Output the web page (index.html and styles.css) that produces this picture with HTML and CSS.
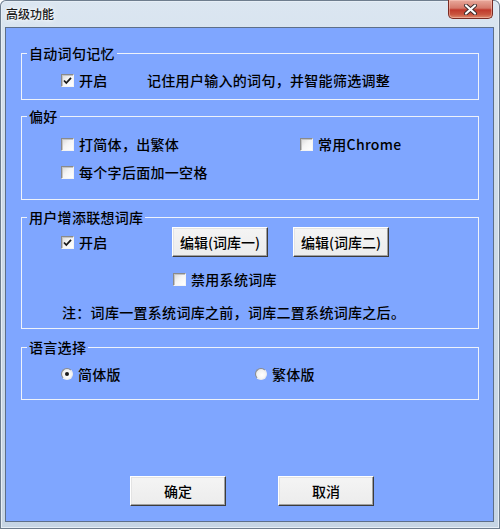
FILE: index.html
```html
<!DOCTYPE html>
<html lang="zh-CN">
<head>
<meta charset="utf-8">
<title>高级功能</title>
<link rel="stylesheet" href="styles.css">
</head>
<body>
<div class="window">
  <div class="titlebar">
    <span class="title">高级功能</span>
    <span class="close">
      <svg width="17" height="11" viewBox="0 0 17 11">
        <path d="M4 1.5 L13 9.5 M13 1.5 L4 9.5" stroke="#3a2a2a" stroke-width="4" stroke-linecap="round"/>
        <path d="M4 1.5 L13 9.5 M13 1.5 L4 9.5" stroke="#ffffff" stroke-width="2.2" stroke-linecap="round"/>
      </svg>
    </span>
  </div>
  <div class="client">
    <fieldset class="group g1">
      <legend>自动词句记忆</legend>
      <div class="body">
        <div class="row">
          <label class="item w86"><span class="cb on"><svg width="11" height="11" viewBox="0 0 11 11"><path d="M2 5.5 L4.3 8 L9 2.8" fill="none" stroke="#1a1a1a" stroke-width="1.8"/></svg></span>开启</label>
          <span class="text">记住用户输入的词句，并智能筛选调整</span>
        </div>
      </div>
    </fieldset>

    <fieldset class="group g2">
      <legend>偏好</legend>
      <div class="body">
        <div class="row">
          <label class="item w239"><span class="cb"></span>打简体，出繁体</label>
          <label class="item"><span class="cb"></span>常用Chrome</label>
        </div>
        <div class="row">
          <label class="item"><span class="cb"></span>每个字后面加一空格</label>
        </div>
      </div>
    </fieldset>

    <fieldset class="group g3">
      <legend>用户增添联想词库</legend>
      <div class="body">
        <div class="row tall">
          <label class="item w111"><span class="cb on"><svg width="11" height="11" viewBox="0 0 11 11"><path d="M2 5.5 L4.3 8 L9 2.8" fill="none" stroke="#1a1a1a" stroke-width="1.8"/></svg></span>开启</label>
          <button class="btn">编辑(词库一)</button>
          <button class="btn">编辑(词库二)</button>
        </div>
        <div class="row r2">
          <label class="item indent"><span class="cb"></span>禁用系统词库</label>
        </div>
        <div class="row r3">
          <span class="text note">注：词库一置系统词库之前，词库二置系统词库之后。</span>
        </div>
      </div>
    </fieldset>

    <fieldset class="group g4">
      <legend>语言选择</legend>
      <div class="body">
        <div class="row">
          <label class="item w194"><span class="rb on"></span>简体版</label>
          <label class="item"><span class="rb"></span>繁体版</label>
        </div>
      </div>
    </fieldset>

    <div class="actions">
      <button class="btn">确定</button>
      <button class="btn">取消</button>
    </div>
  </div>
</div>
</body>
</html>
```

FILE: styles.css
```css
html, body {
  margin: 0;
  padding: 0;
}

body {
  width: 500px;
  height: 529px;
  overflow: hidden;
  font-family: "Noto Sans CJK SC", "Noto Sans", sans-serif;
  background: #ffffff;
}

.window {
  width: 500px;
  height: 529px;
  box-sizing: border-box;
  padding: 0 7px 8px 6px;
  display: flex;
  flex-direction: column;
  background: linear-gradient(180deg, #dbe6f1 0%, #cfdce9 30%, #c6d5e4 100%);
  border-radius: 6px 6px 0 0;
  box-shadow: inset 0 0 0 1px #6e7d8e, inset 0 0 0 2px #e6eef6;
}

.titlebar {
  height: 28px;
  display: flex;
  align-items: flex-start;
  flex: none;
}

.title {
  font-size: 12px;
  line-height: 16px;
  padding-top: 6px;
  color: #1b1b1b;
  font-weight: 500;
  text-shadow: 0 0 6px #ffffff, 0 0 3px #ffffff;
}

.close {
  margin-left: auto;
  width: 45px;
  height: 19px;
  box-sizing: border-box;
  display: flex;
  align-items: center;
  justify-content: center;
  border: 1px solid #7a2a22;
  border-top: none;
  border-radius: 0 0 5px 5px;
  background: linear-gradient(180deg, #e9a99c 0%, #d4796a 45%, #c0392b 55%, #c9553f 80%, #dc8a6c 100%);
  box-shadow: inset 0 0 0 1px rgba(255, 210, 200, 0.45);
}

.close svg {
  display: block;
}

.client {
  flex: 1;
  background: #7fa6ff;
  box-shadow: 0 0 0 1px #5d6f8a;
  padding: 17px 14px 0 15px;
  display: flex;
  flex-direction: column;
}

.group {
  margin: 0;
  padding: 0;
  border: 1px solid #eef2fa;
  min-width: 0;
}

.group legend {
  margin-left: 5px;
  padding: 0 2px;
  font-size: 14px;
  line-height: 16px;
  font-weight: 500;
  letter-spacing: 0.3px;
  color: #000000;
}

.g2 { margin-top: 8px; }
.g3 { margin-top: 9px; }
.g4 { margin-top: 10px; }

.body {
  padding-left: 39px;
  display: flex;
  flex-direction: column;
}

.g1 .body { padding-top: 9px; padding-bottom: 9px; }
.g2 .body { padding-top: 10px; padding-bottom: 17px; gap: 8px; }
.g3 .body { padding-top: 2px; padding-bottom: 6px; }
.g4 .body { padding-top: 9px; padding-bottom: 15px; }

.row {
  display: flex;
  align-items: center;
  height: 20px;
}

.row.tall {
  height: 30px;
}

.r2 { margin-top: 12px; }
.r3 { margin-top: 13px; }

.item {
  display: flex;
  align-items: center;
  gap: 5px;
  font-size: 14px;
  line-height: 20px;
  font-weight: 500;
  letter-spacing: 0.3px;
  color: #000000;
  flex: none;
}

.w86 { width: 86px; }
.w111 { width: 111px; }
.w194 { width: 194px; }
.w239 { width: 239px; }

.indent {
  margin-left: 112px;
}

.text {
  font-size: 14px;
  line-height: 20px;
  font-weight: 500;
  letter-spacing: 0.3px;
  color: #000000;
  white-space: nowrap;
}

.note {
  margin-left: 1px;
}

.cb {
  width: 13px;
  height: 13px;
  box-sizing: border-box;
  flex: none;
  display: flex;
  align-items: center;
  justify-content: center;
  border: 1px solid;
  border-color: #8a8a8a #f4f4f4 #f4f4f4 #8a8a8a;
  background: linear-gradient(135deg, #d8d8d8 0%, #f4f4f4 45%, #ffffff 100%);
  box-shadow: inset 1px 1px 0 #c4c4c4;
}

.cb svg {
  display: block;
}

.rb {
  width: 12px;
  height: 12px;
  box-sizing: border-box;
  flex: none;
  border-radius: 50%;
  border: 1px solid;
  border-color: #8c8c8c #eeeeee #eeeeee #8c8c8c;
  background: radial-gradient(circle at 60% 60%, #ffffff 0%, #f2f2f2 55%, #d2d2d2 100%);
  display: flex;
  align-items: center;
  justify-content: center;
}

.rb.on::after {
  content: "";
  width: 4px;
  height: 4px;
  border-radius: 50%;
  background: #1a1a1a;
}

.btn {
  width: 96px;
  height: 30px;
  box-sizing: border-box;
  padding: 0;
  margin: 0;
  flex: none;
  font-family: "Noto Sans CJK SC", "Noto Sans", sans-serif;
  font-size: 14px;
  line-height: 20px;
  font-weight: 500;
  color: #000000;
  background: linear-gradient(180deg, #f4f4f4 0%, #ececec 100%);
  border: 1px solid;
  border-color: #ffffff #3c3c3c #3c3c3c #ffffff;
  box-shadow: inset -1px -1px 0 #a0a0a0, inset 1px 1px 0 #e3e3e3;
  border-radius: 0;
}

.g3 .btn + .btn {
  margin-left: 25px;
}

.actions {
  margin-top: 76px;
  padding-left: 109px;
  display: flex;
  gap: 52px;
}
```
